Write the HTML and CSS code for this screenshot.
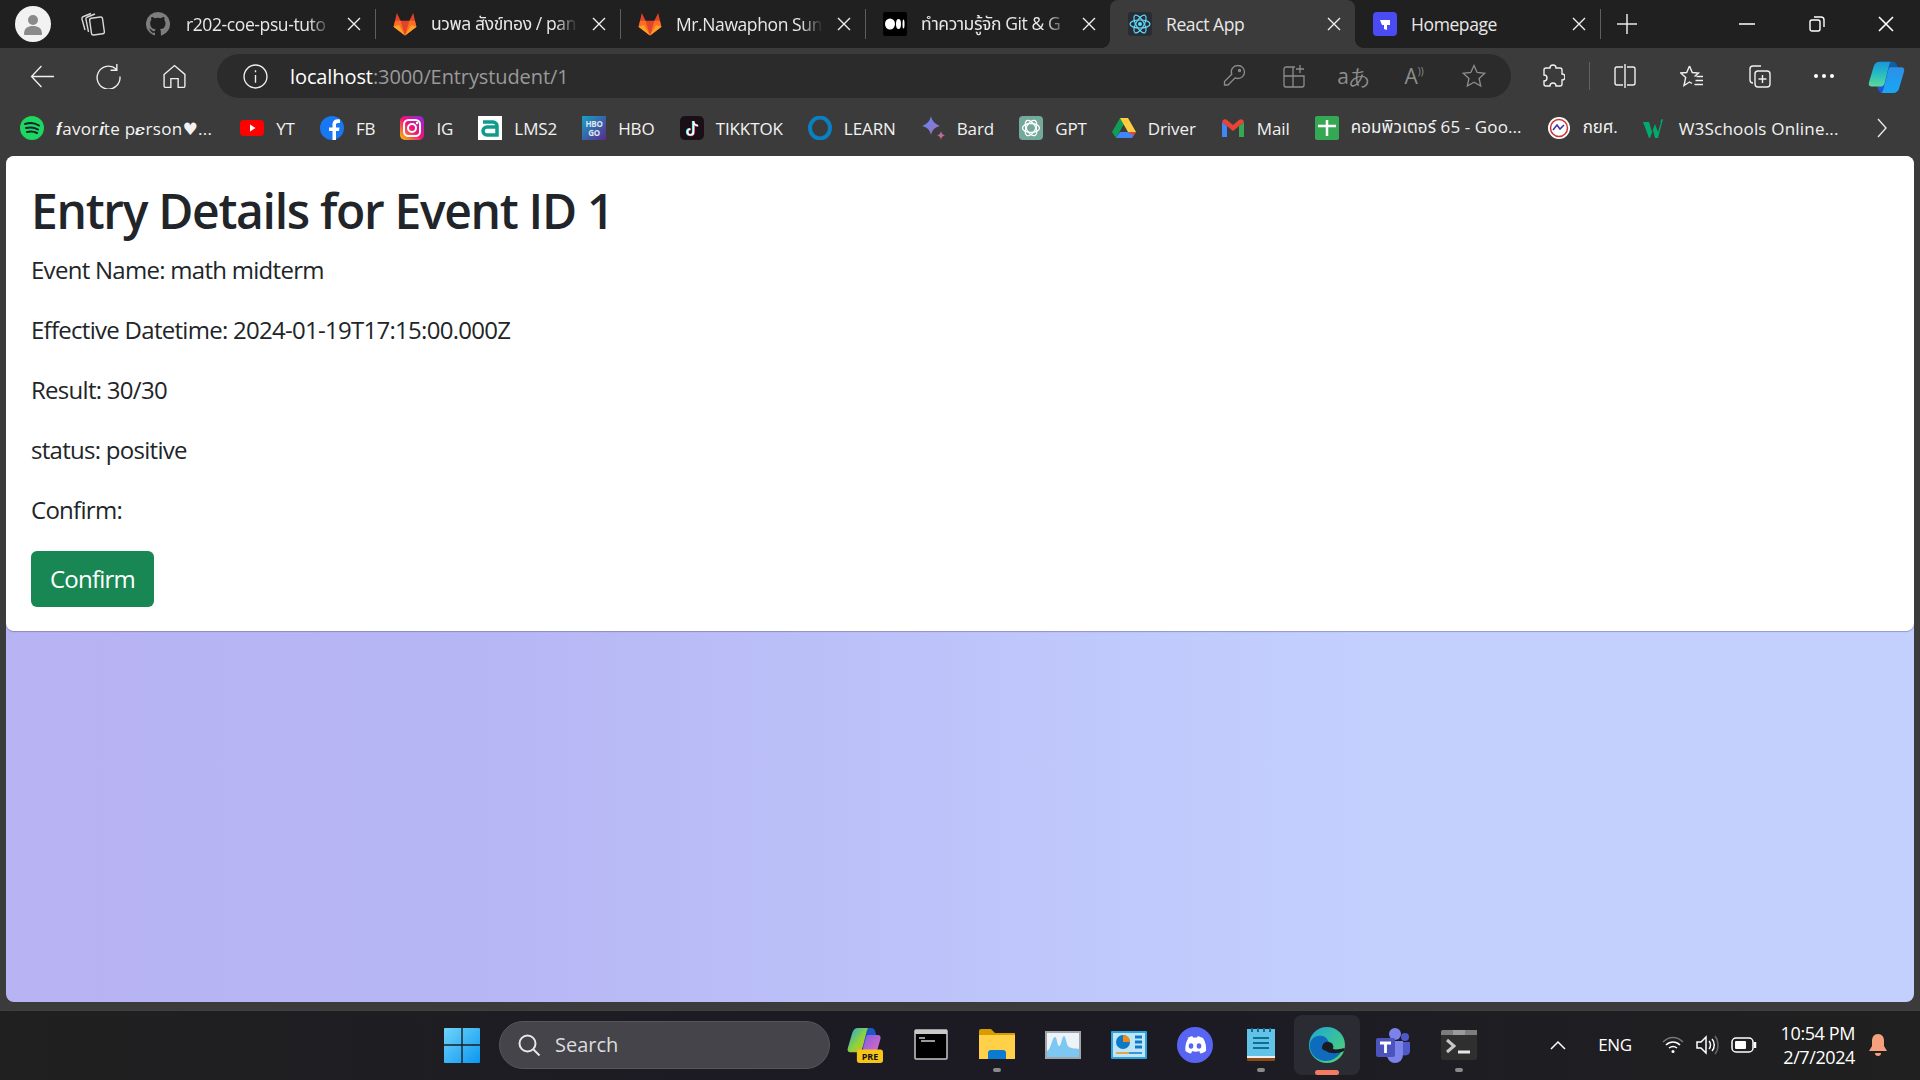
FILE: index.html
```html
<!DOCTYPE html>
<html lang="en">
<head>
<meta charset="utf-8">
<title>React App</title>
<link rel="stylesheet" href="styles.css">
</head>
<body>
<svg class="defs" width="0" height="0"><defs><symbol id="close" viewBox="0 0 14 14"><path d="m1 1 12 12M13 1 1 13" fill="none" stroke="#efefef" stroke-width="1.400"/></symbol><symbol id="fox" viewBox="1 1 22 22"><path fill="#e24329" d="M12 22.500 1.500 14.500 4.500 2 8 9h8l3.500-7 3 12.500z"/><path fill="#fc6d26" d="M12 22.500 8 9H3L1.500 14.500zM12 22.500 16 9h5l1.500 5.500z"/><path fill="#fca326" d="m12 22.500-6-4.500-4.500-3.500 5-1.500zM12 22.500l6-4.500 4.500-3.500-5-1.500z"/></symbol></defs></svg>
<div class="window">
  <header class="tabstrip">
    <div class="avatar"><svg width="24" height="24" viewBox="0 0 24 24"><circle cx="12" cy="8" r="5" fill="#8a8a8a"/><path d="M3 22c0-6 4-8 9-8s9 2 9 8c0 1-1 1-2 1H5c-1 0-2 0-2-1z" fill="#8a8a8a"/></svg></div>
    <svg class="tabs-icon" width="26" height="26" viewBox="0 0 26 26" fill="none" stroke="#d8d8d8" stroke-width="1.400"><path d="M5 19 2 8a2 2 0 0 1 1.500-2.500L11 2.500M8.500 21 6 8.500A2 2 0 0 1 7.500 6L15 3"/><rect x="10.500" y="6.500" width="13" height="17" rx="2" transform="rotate(-8 17 15)"/></svg>
    <div class="tab"><svg class="fav" viewBox="0 0 16 16"><path fill="#7d7d7d" d="M8 0a8 8 0 0 0-2.500 15.600c.4.1.5-.2.5-.4v-1.400c-2.200.5-2.700-1-2.700-1-.4-.9-.9-1.200-.9-1.200-.7-.5 0-.5 0-.5.8.1 1.200.8 1.200.8.700 1.200 1.900.9 2.300.7.100-.5.300-.9.500-1.100-1.800-.2-3.600-.9-3.600-4 0-.9.300-1.600.8-2.100-.1-.2-.4-1 .1-2.100 0 0 .7-.2 2.200.8a7.500 7.500 0 0 1 4 0c1.500-1 2.200-.8 2.200-.8.400 1.100.2 1.900.1 2.100.5.600.8 1.300.8 2.100 0 3.100-1.900 3.800-3.700 4 .3.300.6.800.6 1.500v2.200c0 .2.100.5.600.4A8 8 0 0 0 8 0z"/></svg><span class="tab-title fade">r202-coe-psu-tuto</span><svg class="x"><use href="#close"/></svg></div>
    <i class="tabsep"></i>
    <div class="tab"><svg class="fav"><use href="#fox"/></svg><span class="tab-title fade">นวพล สังข์ทอง / pan</span><svg class="x"><use href="#close"/></svg></div>
    <i class="tabsep"></i>
    <div class="tab"><svg class="fav"><use href="#fox"/></svg><span class="tab-title fade">Mr.Nawaphon Sun</span><svg class="x"><use href="#close"/></svg></div>
    <i class="tabsep"></i>
    <div class="tab"><svg class="fav" viewBox="0 0 24 24"><rect width="24" height="24" rx="2" fill="#000"/><ellipse cx="7" cy="12" rx="5" ry="5.500" fill="#fff"/><ellipse cx="15.500" cy="12" rx="2.500" ry="5" fill="#fff"/><ellipse cx="20.500" cy="12" rx="1" ry="4.500" fill="#fff"/></svg><span class="tab-title fade">ทำความรู้จัก Git &amp; G</span><svg class="x"><use href="#close"/></svg></div>
    <div class="tab active"><svg class="fav" viewBox="0 0 24 24"><rect width="24" height="24" rx="3" fill="#282c34"/><g fill="none" stroke="#61dafb" stroke-width="1.200"><ellipse cx="12" cy="12" rx="10" ry="4"/><ellipse cx="12" cy="12" rx="10" ry="4" transform="rotate(60 12 12)"/><ellipse cx="12" cy="12" rx="10" ry="4" transform="rotate(120 12 12)"/></g><circle cx="12" cy="12" r="2" fill="#61dafb"/></svg><span class="tab-title">React App</span><svg class="x"><use href="#close"/></svg></div>
    <div class="tab"><svg class="fav" viewBox="0 0 24 24"><rect width="24" height="24" rx="4" fill="#4b4bf5"/><path fill="#fff" d="M7 8h10v5h-3v5l-3-1v-4H9z"/></svg><span class="tab-title">Homepage</span><svg class="x"><use href="#close"/></svg></div>
    <i class="tabsep"></i>
    <svg class="newtab" width="22" height="22" viewBox="0 0 22 22" stroke="#e8e8e8" stroke-width="1.500"><path d="M11 1v20M1 11h20"/></svg>
    <div class="winctl">
      <svg width="16" height="16" viewBox="0 0 16 16" stroke="#fff" stroke-width="1.500"><path d="M0 8h16"/></svg>
      <svg width="16" height="16" viewBox="0 0 16 16" fill="none" stroke="#fff" stroke-width="1.400"><rect x="1" y="4" width="10" height="11" rx="2"/><path d="M5 1h7a3 3 0 0 1 3 3v7"/></svg>
      <svg width="16" height="16" viewBox="0 0 16 16" stroke="#fff" stroke-width="1.600"><path d="m1 1 14 14M15 1 1 15"/></svg>
    </div>
  </header>

  <nav class="toolbar">
    <svg class="tool" viewBox="0 0 24 24" fill="none" stroke="#f0f0f0" stroke-width="1.300"><path d="M23 12H1.500M11 2 1.500 12 11 22"/></svg>
    <svg class="tool" viewBox="0 0 24 24" fill="none" stroke="#f0f0f0" stroke-width="1.300"><path d="M19.500 5A11 11 0 1 0 23 12M20 0v6h-6"/></svg>
    <svg class="tool" viewBox="0 0 24 24" fill="none" stroke="#f0f0f0" stroke-width="1.300"><path d="M2 10 12 1.500 22 10v11a1.500 1.500 0 0 1-1.500 1.500h-5V14h-7v8.500h-5A1.500 1.500 0 0 1 2 21z"/></svg>
    <div class="omnibox">
      <svg class="info" viewBox="0 0 24 24" fill="none" stroke="#f0f0f0" stroke-width="1.300"><circle cx="12" cy="12" r="11"/><path d="M12 10.500V18M12 6v2"/></svg>
      <span class="url"><b>localhost</b>:3000/Entrystudent/1</span>
      <div class="omni-tools">
        <span class="oslot"><svg class="otool" viewBox="0 0 24 24" fill="none" stroke="#8d8d8d" stroke-width="1.300"><path d="M16 1.500a6.500 6.500 0 0 1 0 13c-1 0-2-.2-2.800-.6L6 21H2.500v-3.500l7.200-7.200A6.500 6.500 0 0 1 16 1.500z"/><circle cx="17.500" cy="6.500" r="1"/></svg></span>
        <span class="oslot"><svg class="otool" viewBox="0 0 24 24" fill="none" stroke="#8d8d8d" stroke-width="1.300"><path d="M13 3H4a2 2 0 0 0-2 2v16a2 2 0 0 0 2 2h16a2 2 0 0 0 2-2v-9H2M11 3v20M18 1v8M14 5h8"/></svg></span>
        <span class="oslot otext">aあ</span>
        <span class="oslot otext">A<small>))</small></span>
        <span class="oslot"><svg class="otool" viewBox="0 0 24 24" fill="none" stroke="#8d8d8d" stroke-width="1.300"><path d="m12 1.500 3.200 7 7.600.8-5.700 5.100 1.600 7.600L12 18.200 5.300 22l1.600-7.600L1.200 9.300l7.600-.8z"/></svg></span>
      </div>
    </div>
    <div class="right-tools">
      <svg class="rtool" viewBox="0 0 24 24" fill="none" stroke="#f0f0f0" stroke-width="1.400"><path d="M9 4a3 3 0 0 1 6 0h4a2 2 0 0 1 2 2v4a3 3 0 0 1 0 6v4a2 2 0 0 1-2 2h-4a3 3 0 0 0-6 0H5a2 2 0 0 1-2-2v-3a3 3 0 0 0 0-6V6a2 2 0 0 1 2-2z"/></svg>
      <i class="toolsep"></i>
      <svg class="rtool" viewBox="0 0 24 24" fill="none" stroke="#f0f0f0" stroke-width="1.400"><path d="M10 3H4a2 2 0 0 0-2 2v14a2 2 0 0 0 2 2h6M14 3h6a2 2 0 0 1 2 2v14a2 2 0 0 1-2 2h-6M12 0v24"/></svg>
      <svg class="rtool" viewBox="0 0 24 24" fill="none" stroke="#f0f0f0" stroke-width="1.400"><path d="M9.500 2 12.300 8.500 18.500 9 14.500 12.500M9.500 2 6.700 8.500.7 9l5 4.500L4 21.500l5.500-3.500 2.500 1.500M16.500 12.500H23M15.500 16.500H23M14.500 20.500H23"/></svg>
      <svg class="rtool" viewBox="0 0 24 24" fill="none" stroke="#f0f0f0" stroke-width="1.400"><path d="M6 19a3 3 0 0 1-3-3V5a3 3 0 0 1 3-3h8"/><rect x="8" y="7" width="15" height="16" rx="3"/><path d="M15.500 11v8M11.500 15h8"/></svg>
      <svg class="more" width="24" height="6" viewBox="0 0 24 6" fill="#fff"><circle cx="4" cy="3" r="2"/><circle cx="12" cy="3" r="2"/><circle cx="20" cy="3" r="2"/></svg>
      <svg class="copilot" viewBox="0 0 40 36"><defs><linearGradient id="cp1" x1="0" y1="0" x2="0" y2="1"><stop offset="0" stop-color="#1a96dc"/><stop offset=".45" stop-color="#25b9c4"/><stop offset="1" stop-color="#5bdb98"/></linearGradient><linearGradient id="cp2" x1="0" y1="0" x2="0" y2="1"><stop offset="0" stop-color="#2d8fe8"/><stop offset="1" stop-color="#17a8f5"/></linearGradient></defs><path fill="#0f5fa8" d="M14 2h12c4 0 5 2 6 6l1 5-15 12z"/><path fill="#2252d6" d="M10 22h16l-3 11c-.500 2-2 3-4 3h-3c-4 0-5-3-6-7z"/><path fill="url(#cp1)" d="M13 2h10c2 0 1 1 0 3l-5 20c-1 3-2 4-5 4H4c-3 0-4-2-3-5L6 7c1-3 3-5 7-5z"/><path fill="url(#cp2)" d="M25 8h11c3 0 4 2 3 5l-5 17c-1 4-3 6-7 6H16c-2 0-1-1 0-2l6-23c.500-2 1-3 3-3z"/></svg>
    </div>
  </nav>

  <nav class="bookmarks">
    <span class="bm bm-first"><svg class="bmi" viewBox="0 0 24 24"><circle cx="12" cy="12" r="12" fill="#1ed760"/><path d="M5 8c5-1.500 10-1 14 1.500M6 12c4-1 8-.8 12 1.500M7 16c3-.8 7-.6 10 1" fill="none" stroke="#123" stroke-width="2" stroke-linecap="round"/></svg>𝒇avor𝒊te p𝜺rson♥...</span>
    <span class="bm"><svg class="bmi" viewBox="0 0 24 24"><rect y="4" width="24" height="16" rx="4" fill="#f00"/><path d="m10 8.500 5.500 3.500-5.500 3.500z" fill="#fff"/></svg>YT</span>
    <span class="bm"><svg class="bmi" viewBox="0 0 24 24"><circle cx="12" cy="12" r="12" fill="#1877f2"/><path fill="#fff" d="M16 24V15h3l.500-3.500H16V9c0-1.100.500-2 2-2h2V3.500c-3.500-1-7 0-7.500 4v4H9V15h3.500v9z"/></svg>FB</span>
    <span class="bm"><svg class="bmi" viewBox="0 0 24 24"><defs><linearGradient id="ig" x1="0" y1="1" x2="1" y2="0"><stop offset="0" stop-color="#fdc500"/><stop offset=".5" stop-color="#f0117a"/><stop offset="1" stop-color="#8a2be2"/></linearGradient></defs><rect width="24" height="24" rx="5" fill="url(#ig)"/><rect x="4" y="4" width="16" height="16" rx="4.500" fill="none" stroke="#fff" stroke-width="2"/><circle cx="12" cy="12" r="4" fill="none" stroke="#fff" stroke-width="2"/><circle cx="17" cy="7" r="1.200" fill="#fff"/></svg>IG</span>
    <span class="bm"><svg class="bmi" viewBox="0 0 24 24"><rect width="24" height="24" fill="#fff"/><path d="M5 6h10a4 4 0 0 1 4 4v9H9a4 4 0 0 1 0-8h10" fill="none" stroke="#0f9a8c" stroke-width="3.500"/></svg>LMS2</span>
    <span class="bm"><svg class="bmi" viewBox="0 0 24 24"><defs><linearGradient id="hbo" x1="0" y1="0" x2="1" y2="1"><stop offset="0" stop-color="#17a2c8"/><stop offset="1" stop-color="#5a2a8c"/></linearGradient></defs><rect width="24" height="24" fill="url(#hbo)"/><text x="12" y="11" class="hbo-t">HBO</text><text x="12" y="20" class="hbo-t">GO</text></svg>HBO</span>
    <span class="bm"><svg class="bmi" viewBox="0 0 24 24"><rect width="24" height="24" rx="5" fill="#1a0f16"/><path d="M13 5v11a3 3 0 1 1-3-3M13 5c0 2.500 2 4.500 4.500 4.500" fill="none" stroke="#25f4ee" stroke-width="2.200"/><path d="M14 5.500v11a3 3 0 1 1-3-3M14 5.500c0 2.500 2 4.500 4.500 4.500" fill="none" stroke="#fe2c55" stroke-width="1.600"/><path d="M13.500 5v11a3 3 0 1 1-3-3M13.500 5c0 2.500 2 4.500 4.500 4.500" fill="none" stroke="#fff" stroke-width="1.700"/></svg>TIKKTOK</span>
    <span class="bm"><svg class="bmi" viewBox="0 0 24 24"><ellipse cx="12" cy="12" rx="10" ry="10.500" fill="none" stroke="#0a7fc2" stroke-width="4"/></svg>LEARN</span>
    <span class="bm"><svg class="bmi" viewBox="0 0 24 24"><defs><linearGradient id="bard" x1="0" y1="0" x2="1" y2="1"><stop offset="0" stop-color="#4f8df5"/><stop offset=".6" stop-color="#9a72c8"/><stop offset="1" stop-color="#d9655b"/></linearGradient></defs><path fill="url(#bard)" d="M10 0c1 5 4 8 9 10-5 1-8 4-9 9-1-5-4-8-9-9 5-2 8-5 9-10zM20 15c.3 2 1.500 3.500 4 4.500-2.500.5-3.700 2-4 4.500-.3-2.500-1.500-4-4-4.500 2.500-1 3.700-2.500 4-4.500z"/></svg>Bard</span>
    <span class="bm"><svg class="bmi" viewBox="0 0 24 24"><rect width="24" height="24" rx="4" fill="#74aa9c"/><g fill="none" stroke="#fff" stroke-width="1.300"><ellipse cx="12" cy="12" rx="8.500" ry="4.500"/><ellipse cx="12" cy="12" rx="8.500" ry="4.500" transform="rotate(60 12 12)"/><ellipse cx="12" cy="12" rx="8.500" ry="4.500" transform="rotate(120 12 12)"/></g></svg>GPT</span>
    <span class="bm"><svg class="bmi" viewBox="0 0 24 24"><path fill="#0f9d58" d="M8 2 0 16l4 6 8-14z"/><path fill="#ffcd40" d="M8 2h8l8 14h-8z"/><path fill="#4285f4" d="M4 22h16l4-6H8z"/><path fill="#ea4335" d="m16 16 8 0-2.500 3.500z"/></svg>Driver</span>
    <span class="bm"><svg class="bmi" viewBox="0 0 24 24"><path fill="#4285f4" d="M1 6v15h5V10z"/><path fill="#34a853" d="M18 10v11h5V6z"/><path fill="#ea4335" d="M1 6a3 3 0 0 1 5-2l6 5 6-5a3 3 0 0 1 5 2l-11 9z"/></svg>Mail</span>
    <span class="bm"><svg class="bmi" viewBox="0 0 24 24"><rect width="24" height="24" rx="2" fill="#34a853"/><path d="M12 4v16M3 10h18" stroke="#fff" stroke-width="2.500"/></svg>คอมพิวเตอร์ 65 - Goo...</span>
    <span class="bm"><svg class="bmi" viewBox="0 0 24 24"><circle cx="12" cy="12" r="11" fill="#fff"/><circle cx="12" cy="12" r="8.500" fill="none" stroke="#c33" stroke-width="1.500"/><path d="m6 14 4-5 3 4 4-4" fill="none" stroke="#33a" stroke-width="1.500"/></svg>กยศ.</span>
    <span class="bm"><svg class="bmi" viewBox="0 0 24 24"><path fill="#04aa6d" d="M0 6h6l3 10 3-8 3 8 3-10h-1l2-3h1l-5 19h-3l-2-8-3 8H6z"/></svg>W3Schools Online...</span>
    <svg class="bm-more" viewBox="0 0 12 20" fill="none" stroke="#e8e8e8" stroke-width="1.400"><path d="m2 1 8 9-8 9"/></svg>
  </nav>

  <main class="viewport">
    <section class="card">
      <h2>Entry Details for Event ID 1</h2>
      <p>Event Name: math midterm</p>
      <p>Effective Datetime: 2024-01-19T17:15:00.000Z</p>
      <p>Result: 30/30</p>
      <p>status: positive</p>
      <p>Confirm:</p>
      <button class="btn" type="button">Confirm</button>
    </section>
  </main>

  <footer class="taskbar">
    <div class="tb-center">
      <svg class="start" viewBox="0 0 36 36"><defs><linearGradient id="win" x1="0" y1="0" x2="1" y2="1"><stop offset="0" stop-color="#6fd4fb"/><stop offset="1" stop-color="#0b97f0"/></linearGradient></defs><path fill="url(#win)" d="M1 1h16.300v16.300H0V2a1 1 0 0 1 1-1zM18.700 1H35a1 1 0 0 1 1 1v15.300H18.700zM0 18.700h17.300V36H1a1 1 0 0 1-1-1zM18.700 18.700H36V35a1 1 0 0 1-1 1H18.700z"/></svg>
      <div class="search"><svg width="24" height="24" viewBox="0 0 24 24" fill="none" stroke="#e8e8e8" stroke-width="2"><circle cx="10.500" cy="10.500" r="8"/><path d="m16.500 16.500 6 6"/></svg><span>Search</span></div>
      <div class="app"><svg class="appi" viewBox="0 0 40 40"><defs><linearGradient id="cp3" x1="0" y1="0" x2="1" y2="1"><stop offset="0" stop-color="#18a8e8"/><stop offset=".55" stop-color="#8fd23a"/><stop offset="1" stop-color="#f7b21b"/></linearGradient><linearGradient id="cp4" x1="0" y1="0" x2="1" y2="1"><stop offset="0" stop-color="#7a5ce6"/><stop offset="1" stop-color="#ef6bbd"/></linearGradient></defs><path fill="#1a58c8" d="M14 1h12c4 0 5 2 6 6l1 5-15 12z"/><path fill="url(#cp3)" d="M12 1h10c2 0 1 1 0 3l-5 20c-1 3-2 4-5 4H4c-3 0-4-2-3-5L6 6c1-3 3-5 6-5z"/><path fill="url(#cp4)" d="M24 9h10c3 0 4 2 3 5l-4 14c-1 3-3 5-6 5H16c-2 0-1-1 0-2l5-19c.500-2 1-3 3-3z"/><rect x="11" y="25" width="29" height="15" rx="3" fill="#f5c518"/><text x="25.500" y="36.500" class="pre">PRE</text></svg></div>
      <div class="app"><svg class="appi" viewBox="0 0 36 36"><rect x="2" y="3" width="32" height="29" rx="1" fill="#000" stroke="#c8c8c8" stroke-width="1.500"/><rect x="2" y="3" width="32" height="4" fill="#c8c8c8"/><path d="M6 11h6M8 14h14" stroke="#ccc" stroke-width="1.500"/></svg></div>
      <div class="app on"><svg class="appi" viewBox="0 0 36 36"><path fill="#d89b00" d="M0 4a2 2 0 0 1 2-2h10l4 4h20v26H0z"/><path fill="#ffd048" d="M0 8h36v24H0z"/><path fill="#0b7bd0" d="M9 32v-6a3 3 0 0 1 3-3h12a3 3 0 0 1 3 3v6z"/></svg><i class="dot"></i></div>
      <div class="app"><svg class="appi" viewBox="0 0 36 36"><rect y="4" width="36" height="28" fill="#9fa6ad"/><rect x="2" y="6" width="32" height="24" fill="#eef3f7"/><path fill="#7cc8f3" d="M2 24c4-1 5-14 8-14 2 0 2 8 4 9s3-10 5-10 2 9 5 11 7 1 10 2v8H2z"/></svg></div>
      <div class="app"><svg class="appi" viewBox="0 0 36 36"><rect y="4" width="36" height="28" rx="1" fill="#2ba3e0"/><rect x="2" y="6" width="32" height="24" fill="#bfe6f7"/><circle cx="12" cy="15" r="7" fill="#0f79c9"/><path fill="#f08a12" d="M12 8a7 7 0 0 1 7 7h-7z"/><path stroke="#0f79c9" stroke-width="3" d="M24 10h7M24 15h7M24 20h7"/><path stroke="#e8931c" stroke-width="1.500" d="M5 26h13"/><path stroke="#0f79c9" stroke-width="1.500" d="M18 26h13"/></svg></div>
      <div class="app"><svg class="appi" viewBox="0 0 36 36"><circle cx="18" cy="18" r="18" fill="#5865f2"/><path fill="#fff" d="M10 11c3-1.500 5-1.800 5.500-1.800l.5 1.300h4l.5-1.300c.500 0 2.500.3 5.500 1.800 2.500 4 3.500 8.500 3 13-2 1.500-4 2.300-5.500 2.500l-1.300-2 2-1c-3 1.500-8 1.500-11 0l2 1-1.300 2c-1.500-.2-3.500-1-5.500-2.500-.5-4.500.5-9 3-13z"/><ellipse cx="14" cy="19" rx="2.300" ry="2.700" fill="#5865f2"/><ellipse cx="22" cy="19" rx="2.300" ry="2.700" fill="#5865f2"/></svg></div>
      <div class="app on"><svg class="appi" viewBox="0 0 36 36"><rect x="4" y="2" width="28" height="30" fill="#62c3e6"/><path fill="#8a4a16" d="M4 30h28v3a1 1 0 0 1-1 1H5a1 1 0 0 1-1-1z"/><rect x="4" y="29" width="28" height="2" fill="#eee"/><path stroke="#0d6f93" stroke-width="2" d="M10 11h16M10 16h16M10 21h16M9 1v4M15 1v4M21 1v4M27 1v4"/></svg><i class="dot"></i></div>
      <div class="app current"><svg class="appi" viewBox="0 0 36 36"><defs><linearGradient id="edge" x1="0" y1="0" x2="1" y2="1"><stop offset="0" stop-color="#1ea7d8"/><stop offset="1" stop-color="#52d66b"/></linearGradient></defs><circle cx="18" cy="18" r="18" fill="url(#edge)"/><path fill="#0f6cbd" d="M1 16c2-7 10-9 15-6 3 2 4 5 4 8 0 3-3 4-6 3 3 5 12 6 19 2-4 9-13 13-22 10C4 30 0 24 1 16z"/><path fill="#1b1b24" d="M13 21c0-4 3-7 7-6s5 4 4 7c3 1 7 0 12-1 0-1-.5 2-1 3-6 3-14 3-18 0-3-1-4-2-4-3z"/></svg><i class="bar"></i></div>
      <div class="app"><svg class="appi" viewBox="0 0 36 36"><circle cx="20" cy="7" r="6" fill="#7b83eb"/><circle cx="30" cy="10" r="4" fill="#5059c9"/><path fill="#7b83eb" d="M12 14h16v14a8 8 0 0 1-16 0z"/><path fill="#5059c9" d="M28 15h7v10a5 5 0 0 1-7 3z"/><rect x="1" y="11" width="19" height="19" rx="2" fill="#4b53bc"/><path stroke="#fff" stroke-width="2.800" d="M5 16h11M10.500 16v10"/></svg></div>
      <div class="app on"><svg class="appi" viewBox="0 0 36 36"><rect y="3" width="36" height="30" rx="2" fill="#2f2f2f"/><path d="M0 5a2 2 0 0 1 2-2h34v5H0z" fill="#7d7d7d"/><path d="M12 3h12v5H12z" fill="#9b9b9b"/><path d="m6 13 7 6-7 6" fill="none" stroke="#c8c8c8" stroke-width="3"/><path d="M17 25h12" stroke="#e8e8e8" stroke-width="3"/></svg><i class="dot"></i></div>
    </div>
    <div class="tray">
      <svg width="16" height="10" viewBox="0 0 16 10" fill="none" stroke="#fff" stroke-width="1.500"><path d="m1 9 7-7 7 7"/></svg>
      <span class="lang">ENG</span>
      <svg width="22" height="20" viewBox="0 0 22 20" fill="none" stroke="#fff" stroke-width="1.500"><path d="M1 7c6-6 14-6 20 0" stroke="#777"/><path d="M4 10c4-4 10-4 14 0M7 13c2.500-2 5.500-2 8 0"/><circle cx="11" cy="16.500" r="1.500" fill="#fff" stroke="none"/></svg>
      <svg width="24" height="20" viewBox="0 0 24 20" fill="none" stroke="#fff" stroke-width="1.500"><path d="M1 7v6h4l5 5V2L5 7z"/><path d="M13 6c2 2 2 6 0 8M16 4c3 3 3 9 0 12"/><path d="M19 1c4 5 4 13 0 18" stroke="#666"/></svg>
      <svg width="26" height="16" viewBox="0 0 26 16" fill="none" stroke="#fff" stroke-width="1.500"><rect x="1" y="1" width="21" height="14" rx="4"/><rect x="4" y="4" width="11" height="8" rx="1" fill="#fff" stroke="none"/><path d="M24 5v6" stroke-width="2.500"/></svg>
      <div class="clock"><span>10:54 PM</span><span>2/7/2024</span></div>
      <svg width="20" height="24" viewBox="0 0 20 24"><path fill="#f7a07e" d="M10 1c4 0 6 3 6 7v5l3 5H1l3-5V8c0-4 2-7 6-7zM7 20h6a3 3 0 0 1-6 0z"/></svg>
    </div>
  </footer>
</div>
</body>
</html>
```
FILE: styles.css
```css
* { box-sizing: border-box; }
html, body { margin: 0; height: 100%; }
body { font-family: "Open Sans", "Noto Sans", "Noto Sans Thai", "DejaVu Sans", sans-serif; overflow: hidden; background: #3b3b3b; }
.defs { display: block; height: 0; }
.window { width: 1920px; height: 1080px; display: flex; flex-direction: column; }

.tabstrip { height: 48px; flex: none; background: #202020; display: flex; align-items: center; color: #e8e8e8; font-size: 17.500px; }
.avatar { width: 36px; height: 36px; margin-left: 15px; border-radius: 50%; background: #f2f2f2; display: flex; align-items: center; justify-content: center; }
.tabs-icon { margin-left: 29px; margin-right: 24px; }
.tab { width: 245px; height: 48px; flex: none; display: flex; align-items: center; padding: 0 14px 0 18px; gap: 14px; position: relative; }
.tabs-icon + .tab { padding-left: 16px; gap: 16px; }
.tab.active { background: #3b3b3b; border-radius: 8px 8px 0 0; }
.tab.active::before, .tab.active::after { content: ""; position: absolute; bottom: 0; width: 8px; height: 8px; }
.tab.active::before { left: -8px; background: radial-gradient(circle at 0 0, #202020 7.500px, #3b3b3b 8px); }
.tab.active::after { right: -8px; background: radial-gradient(circle at 100% 0, #202020 7.500px, #3b3b3b 8px); }
.fav { width: 24px; height: 24px; flex: none; }
.tab-title { flex: 1; min-width: 0; white-space: nowrap; letter-spacing: -.4px; }
.tab-title.fade { -webkit-mask-image: linear-gradient(90deg, #000 85%, transparent 100%); mask-image: linear-gradient(90deg, #000 85%, transparent 100%); }
.x { width: 14px; height: 14px; flex: none; }
.tabsep { width: 1px; height: 30px; background: #5e5e5e; flex: none; margin: 0 -1px 0 0; }
.newtab { margin-left: 16px; }
.winctl { margin-left: auto; width: 181px; display: flex; justify-content: space-between; padding: 0 26px 0 0; }

.toolbar { height: 56px; flex: none; background: #3b3b3b; display: flex; align-items: center; padding-left: 30px; }
.tool { width: 25px; height: 25px; margin-right: 41px; flex: none; }
.omnibox { margin-left: -11px; width: 1294px; height: 44px; background: #2b2b2b; border-radius: 22px; display: flex; align-items: center; padding: 0 22px 0 26px; color: #9a9a9a; font-size: 20px; }
.info { width: 25px; height: 25px; flex: none; margin-right: 22px; }
.url { letter-spacing: -.1px; }
.url b { font-weight: 400; color: #fff; }
.omni-tools { margin-left: auto; display: flex; align-items: center; gap: 30px; }
.oslot { width: 30px; display: flex; justify-content: center; align-items: center; }
.otool { width: 24px; height: 24px; }
.otext { color: #8d8d8d; font-size: 21px; white-space: nowrap; }
.otext small { font-size: 10px; align-self: flex-start; margin-top: 2px; }
.right-tools { display: flex; align-items: center; margin-left: 30px; flex: 1; }
.rtool { width: 24px; height: 24px; flex: none; margin-right: 43px; }
.rtool:first-child { margin-right: 24px; }
.toolsep { width: 1px; height: 28px; background: #626262; margin-right: 23px; }
.more { margin-left: -2px; margin-right: 32px; flex: none; }
.copilot { width: 37px; height: 33px; }

.bookmarks { height: 52px; flex: none; background: #3b3b3b; display: flex; align-items: center; padding: 0 14px 4px 20px; color: #f2f2f2; font-size: 17px; letter-spacing: -.1px; }
.bm { display: flex; align-items: center; gap: 12px; white-space: nowrap; margin-right: 25px; }
.bm-first { letter-spacing: .28px; margin-right: 28px; }
.bm:nth-child(13) { letter-spacing: .1px; }
.bm:nth-child(15) { letter-spacing: .2px; }
.bmi { width: 24px; height: 24px; flex: none; }
.hbo-t { font: 700 8px "Open Sans", sans-serif; fill: #dfe6f2; text-anchor: middle; letter-spacing: -.3px; }
.bm-more { width: 12px; height: 20px; margin-left: auto; margin-right: 18px; flex: none; }

.viewport { flex: none; height: 846px; margin: 0 6px; border-radius: 8px; overflow: hidden; background: linear-gradient(90deg, #b8b3f3 0%, #b6b6f4 25%, #bbbff8 42%, #c0cafc 60%, #c3d0fe 72%, #c3d0fe 100%); }
.card { padding: 26px 25px 24px; background: #fff; color: #212529; font-size: 24px; line-height: 1.5; border-radius: 0 0 8px 8px; box-shadow: 0 1px 1px rgba(60, 60, 90, .35); }
.card h2 { margin: 0 0 12px; font-size: 48px; line-height: 1.2; font-weight: 600; letter-spacing: -1.320px; }
.card p { margin: 0 0 24px; letter-spacing: -.72px; }
.card p:last-of-type { margin-bottom: 23px; }
.btn { display: block; height: 56px; width: 123px; border: 0; border-radius: 6px; background: #198754; color: #fff; font: inherit; letter-spacing: -.75px; padding: 0; }

.taskbar { flex: 1; margin-top: 8px; padding-bottom: 2px; background: linear-gradient(90deg, #202020, #1c1b24 40%, #1c1b24 60%, #202020); border-top: 1px solid #404040; display: flex; align-items: center; color: #fff; }
.tb-center { display: flex; align-items: center; margin-left: 444px; }
.start { width: 36px; height: 36px; margin-right: 19px; }
.search { width: 331px; height: 48px; border-radius: 24px; background: #44444a; border: 1px solid #55555a; display: flex; align-items: center; gap: 14px; padding-left: 17px; color: #ddd; font-size: 20px; margin-right: 2px; }
.app { width: 66px; height: 60px; display: flex; align-items: center; justify-content: center; position: relative; border-radius: 8px; }
.appi { width: 36px; height: 36px; }
.pre { font: 700 10px "Open Sans", sans-serif; fill: #111; text-anchor: middle; }
.dot { position: absolute; bottom: 3px; left: 50%; margin-left: -4px; width: 8px; height: 4px; border-radius: 2px; background: #8a8a8a; }
.current { background: #2b2b33; }
.bar { position: absolute; bottom: 0; left: 50%; margin-left: -12px; width: 24px; height: 5px; border-radius: 3px; background: #f47b63; }
.tray { margin-left: auto; display: flex; align-items: center; padding-right: 32px; font-size: 17px; }
.lang { margin: 0 30px 0 32px; letter-spacing: -.4px; }
.tray svg:nth-of-type(3) { margin: 0 11px 0 12px; }
.clock { display: flex; flex-direction: column; align-items: flex-end; margin: 0 13px 0 24px; font-size: 18px; line-height: 24px; letter-spacing: -.4px; }
```
